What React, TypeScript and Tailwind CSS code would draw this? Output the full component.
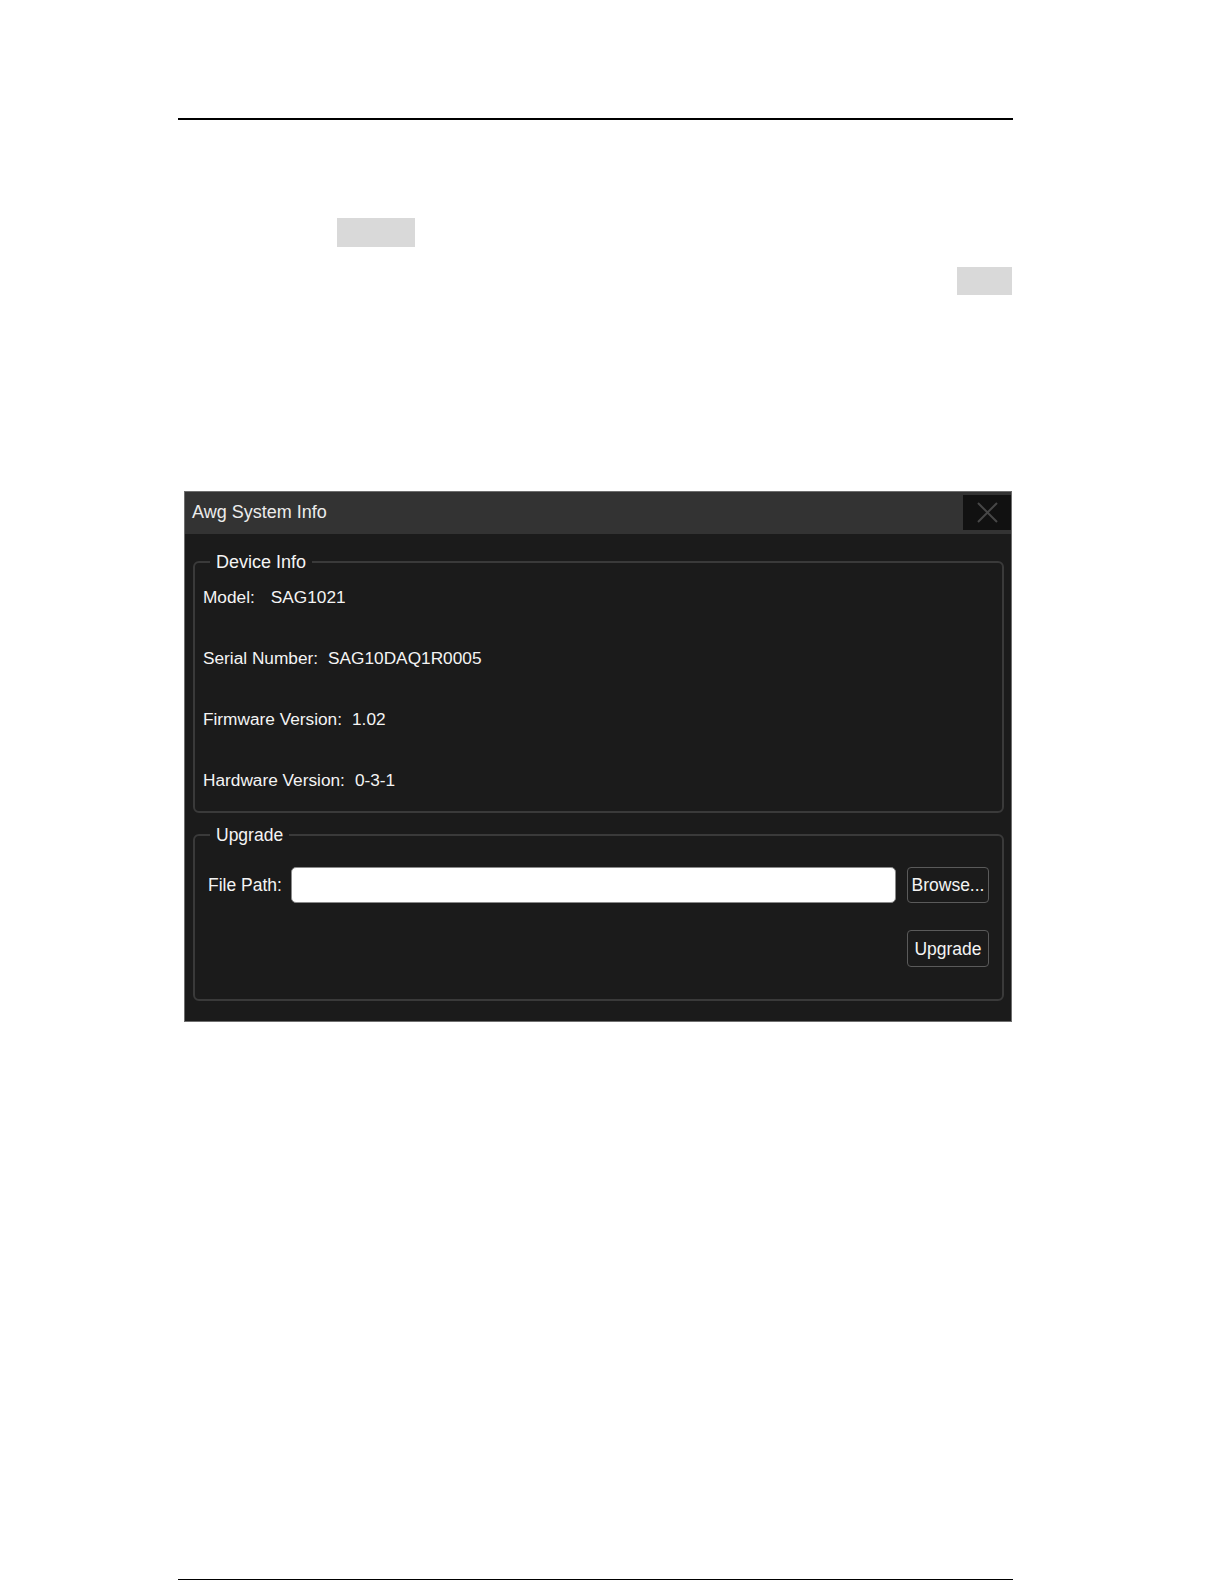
import React from "react";

const infoRows = [
  { label: "Model:", value: "SAG1021", gap: "w-[16px]" },
  { label: "Serial Number:", value: "SAG10DAQ1R0005", gap: "w-[10px]" },
  { label: "Firmware Version:", value: "1.02", gap: "w-[10px]" },
  { label: "Hardware Version:", value: "0-3-1", gap: "w-[10px]" },
];

function CloseIcon() {
  return (
    <svg width="21" height="21" viewBox="0 0 21 21" fill="none">
      <path d="M1 1L20 20M20 1L1 20" stroke="#474747" strokeWidth="2" />
    </svg>
  );
}

function SystemInfoDialog() {
  return (
    <div className="ml-[6px] mt-[196px] w-[828px] h-[531px] flex flex-col border border-[#6e6e6e] bg-[#1b1b1b] text-[#f4f4f4] font-['Liberation_Sans',Arial,sans-serif]">
      {/* title bar */}
      <div className="h-[42px] flex items-start justify-between bg-[#333333]">
        <span className="pl-[7px] pt-[10px] text-[18px] leading-[20px] text-[#ececec]">
          Awg System Info
        </span>
        <button className="mt-[3px] w-[48px] h-[35px] bg-[#111111] flex items-center justify-center">
          <CloseIcon />
        </button>
      </div>

      <div className="flex-1 flex flex-col pl-[8px] pr-[7px] pt-[18px]">
        <fieldset className="h-[261px] border-2 border-[#3a3a3a] rounded-[6px] pl-[8px] pt-[15px]">
          <legend className="ml-[7px] px-[6px] text-[18px] leading-[20px]">Device Info</legend>
          <div className="flex flex-col gap-[41px]">
            {infoRows.map((row) => (
              <div key={row.label} className="flex text-[17.25px] leading-[20px]">
                <span>{row.label}</span>
                <span className={row.gap} />
                <span>{row.value}</span>
              </div>
            ))}
          </div>
        </fieldset>

        <fieldset className="mt-[12px] h-[176px] border-2 border-[#3a3a3a] rounded-[6px] pl-[13px] pr-[13px] pt-[22px]">
          <legend className="ml-[2px] px-[6px] text-[17.5px] leading-[20px]">Upgrade</legend>
          <div className="flex items-center text-[17.5px]">
            <span className="leading-[20px]">File Path:</span>
            <input
              type="text"
              className="ml-[9px] flex-1 h-[36px] rounded-[5px] bg-white border border-[#8a8a8a] outline-none"
            />
            <button className="ml-[11px] w-[82px] h-[36px] rounded-[4px] border border-[#5a5a5a] text-[17.5px] leading-[20px]">
              Browse...
            </button>
          </div>
          <div className="mt-[27px] flex justify-end">
            <button className="w-[82px] h-[37px] rounded-[4px] border border-[#5a5a5a] text-[17.5px] leading-[20px]">
              Upgrade
            </button>
          </div>
        </fieldset>
      </div>
    </div>
  );
}

export default function App() {
  return (
    <div className="w-[1225px] h-[1585px] bg-white pl-[178px] pt-[118px]">
      <div className="w-[835px] flex flex-col">
        <div className="h-[2px] bg-black" />

        {/* placeholder highlights from the page */}
        <div className="ml-[159px] mt-[98px] w-[78px] h-[29px] bg-[#d9d9d9]" />
        <div className="self-end mr-px mt-[20px] w-[55px] h-[28px] bg-[#d9d9d9]" />

        <SystemInfoDialog />

        <div className="mt-[557px] h-px bg-black" />
      </div>
    </div>
  );
}
